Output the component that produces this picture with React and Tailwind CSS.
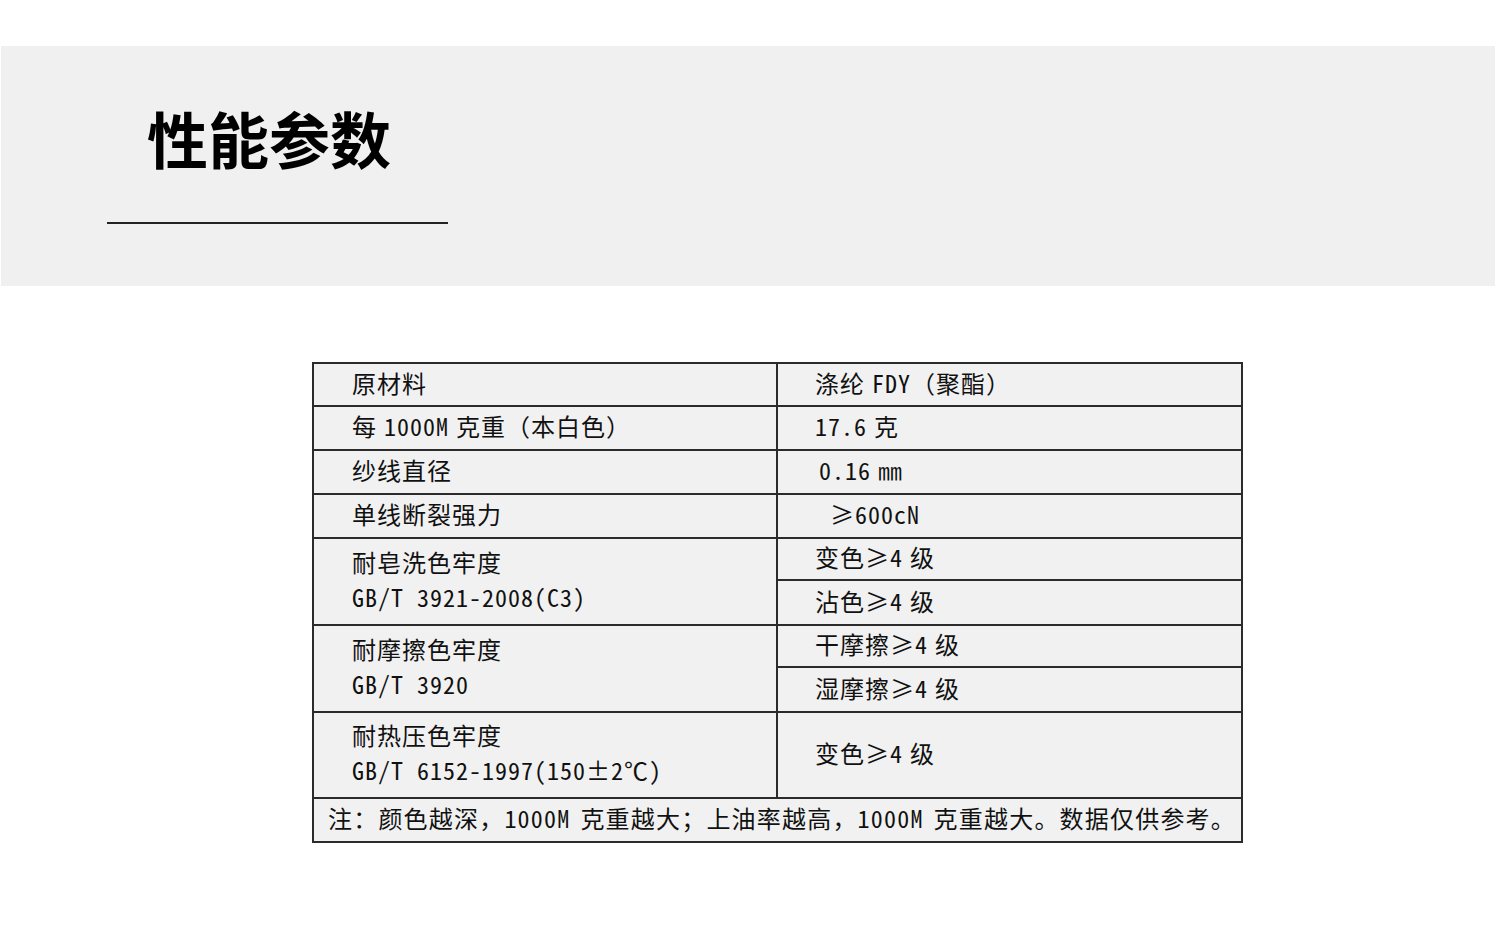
const FONT = "font-['Noto_Sans_Mono_CJK_SC','Noto_Sans_CJK_SC',sans-serif]";
const LINE = 'border-[#2b2b2b]';

// 把空格换成较窄的间隔，贴近原图的字距
function T({ text, gap = 'w-[7px]' }) {
    const parts = text.split(' ');
    return parts.map((p, i) => (
        <span key={i}>
            {p}
            {i < parts.length - 1 && <span className={`inline-block ${gap}`} />}
        </span>
    ));
}

function Cell({ children, className = '' }) {
    return (
        <div className={`flex flex-col justify-center pb-[4px] ${className}`}>
            {children}
        </div>
    );
}

// 单行参数
function SimpleRow({ label, value, h, valueClass = 'pl-[37px]' }) {
    return (
        <div className={`grid grid-cols-[464px_1fr] border-b-2 ${LINE}`} style={{ height: h }}>
            <Cell className={`pl-[38px] border-r-2 ${LINE}`}>
                <div><T text={label} /></div>
            </Cell>
            <Cell className={valueClass}>
                <div><T text={value} /></div>
            </Cell>
        </div>
    );
}

// 两行标签 + 右侧可能分两格
function DoubleRow({ title, standard, values, h }) {
    return (
        <div className={`grid grid-cols-[464px_1fr] border-b-2 ${LINE}`} style={{ height: h }}>
            <Cell className={`pl-[38px] border-r-2 ${LINE} leading-[35px] pb-[6px]`}>
                <div>{title}</div>
                <div className="whitespace-pre">{standard}</div>
            </Cell>
            <div className="flex flex-col">
                {values.map((v, i) => (
                    <Cell
                        key={i}
                        className={`pl-[37px] ${values.length > 1 && i === 0 ? `h-[42px] border-b-2 ${LINE}` : 'flex-1'}`}
                    >
                        <div><T text={v} /></div>
                    </Cell>
                ))}
            </div>
        </div>
    );
}

export default function App() {
    return (
        <div className={`w-[1500px] h-[927px] bg-white ${FONT} text-[#111]`}>
            <div className="h-[46px]" />
            <div className="ml-[1px] mr-[5px] h-[240px] bg-[#f0f0f0] flex flex-col">
                <h1 className="pl-[146px] pt-[62px] text-[61px] leading-[60px] font-bold text-black font-['Noto_Sans_CJK_SC',sans-serif]">
                    性能参数
                </h1>
                <div className="ml-[106px] mt-[54px] w-[341px] h-[2px] bg-[#222]" />
            </div>

            <div className={`mt-[76px] ml-[312px] w-[931px] border-x-2 border-t-2 ${LINE} bg-[#f1f1f1] text-[24px] tracking-[1px]`}>
                <SimpleRow h={43} label="原材料" value="涤纶 FDY（聚酯）" />
                <SimpleRow h={44} label="每 1000M 克重（本白色）" value="17.6 克" />
                <SimpleRow h={44} label="纱线直径" value="0.16 ㎜" valueClass="pl-[41px]" />
                <SimpleRow h={44} label="单线断裂强力" value="≥600cN" valueClass="pl-[52px]" />
                <DoubleRow h={87} title="耐皂洗色牢度" standard="GB/T 3921-2008(C3)" values={['变色≥4 级', '沾色≥4 级']} />
                <DoubleRow h={87} title="耐摩擦色牢度" standard="GB/T 3920" values={['干摩擦≥4 级', '湿摩擦≥4 级']} />
                <DoubleRow h={86} title="耐热压色牢度" standard="GB/T 6152-1997(150±2℃)" values={['变色≥4 级']} />
                <div className={`h-[44px] flex items-center pl-[14px] pb-[4px] border-b-2 ${LINE}`}>
                    <div className="whitespace-nowrap tracking-[1.2px]">
                        <T gap="w-[10px]" text="注：颜色越深，1000M 克重越大；上油率越高，1000M 克重越大。数据仅供参考。" />
                    </div>
                </div>
            </div>
        </div>
    );
}
